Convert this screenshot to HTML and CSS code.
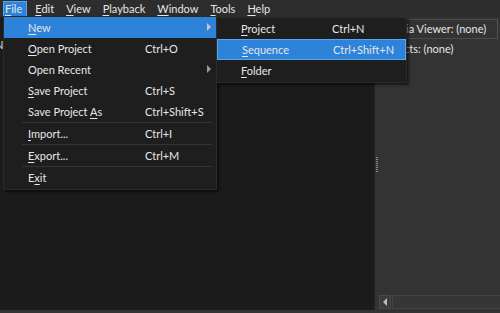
FILE: index.html
```html
<!DOCTYPE html>
<html>
<head>
<meta charset="utf-8">
<link rel="stylesheet" href="styles.css">
</head>
<body>
<div class="app">
  <div class="menubar">
    <span class="mb-item active"><u>F</u>ile</span>
    <span class="mb-item"><u>E</u>dit</span>
    <span class="mb-item"><u>V</u>iew</span>
    <span class="mb-item"><u>P</u>layback</span>
    <span class="mb-item"><u>W</u>indow</span>
    <span class="mb-item"><u>T</u>ools</span>
    <span class="mb-item"><u>H</u>elp</span>
  </div>
  <div class="workspace">
    <div class="left-pane">
      <div class="peek">N</div>
    </div>
    <div class="right-pane">
      <div class="viewer-title">Media Viewer: (none)</div>
      <div class="effects-title">Effects: (none)</div>
      <div class="splitter"></div>
      <div class="spacer"></div>
      <div class="hscroll">
        <div class="arrow-btn"><span class="tri-left"></span></div>
        <div class="track"></div>
      </div>
    </div>
  </div>
  <div class="statusbar"></div>

  <div class="menu file-menu">
    <div class="mi sel"><span class="lbl"><u>N</u>ew</span><span class="sc"></span><span class="sub-arrow"></span></div>
    <div class="mi"><span class="lbl"><u>O</u>pen Project</span><span class="sc">Ctrl+O</span></div>
    <div class="mi"><span class="lbl">Open Recent</span><span class="sc"></span><span class="sub-arrow dim"></span></div>
    <div class="mi"><span class="lbl"><u>S</u>ave Project</span><span class="sc">Ctrl+S</span></div>
    <div class="mi"><span class="lbl">Save Project <u>A</u>s</span><span class="sc">Ctrl+Shift+S</span></div>
    <div class="sep"></div>
    <div class="mi"><span class="lbl"><u>I</u>mport...</span><span class="sc">Ctrl+I</span></div>
    <div class="sep"></div>
    <div class="mi"><span class="lbl"><u>E</u>xport...</span><span class="sc">Ctrl+M</span></div>
    <div class="sep"></div>
    <div class="mi"><span class="lbl">E<u>x</u>it</span><span class="sc"></span></div>
  </div>

  <div class="menu sub-menu">
    <div class="mi"><span class="lbl"><u>P</u>roject</span><span class="sc">Ctrl+N</span></div>
    <div class="mi sel boxed"><span class="lbl"><u>S</u>equence</span><span class="sc">Ctrl+Shift+N</span></div>
    <div class="mi"><span class="lbl"><u>F</u>older</span><span class="sc"></span></div>
  </div>
</div>
</body>
</html>
```
FILE: styles.css
```css
* { box-sizing: border-box; }
html, body { margin: 0; padding: 0; }
body {
  width: 500px;
  height: 313px;
  overflow: hidden;
  background: #1b1b1b;
  font-family: Lato, "Noto Sans", sans-serif;
  font-size: 11px;
  color: #e6e6e6;
}
u { text-decoration: underline; text-underline-offset: 2px; text-decoration-thickness: 1px; }
.app {
  position: relative;
  width: 500px;
  height: 313px;
  display: flex;
  flex-direction: column;
}
.menubar {
  height: 17px;
  background: #2d2d2d;
  display: flex;
  align-items: stretch;
  padding-left: 3px;
  padding-top: 1px;
}
.mb-item {
  padding: 0 6px;
  line-height: 15px;
}
.mb-item.active {
  background: #2d82d9;
  border: 1px solid #5ea4e8;
  line-height: 13px;
  padding: 0 4px 0 1px;
  margin-right: 2px;
}
.workspace {
  flex: 1;
  display: flex;
}
.left-pane {
  flex: 1;
  background: #1b1b1b;
  position: relative;
}
.peek {
  padding: 21px 0 0 0;
  margin-left: -5px;
  color: #ddd;
}
.right-pane {
  width: 127px;
  background: #333333;
  border-left: 2px solid #202020;
  display: flex;
  flex-direction: column;
  position: relative;
  padding-left: 4px;
}
.viewer-title {
  margin-top: 2px;
  height: 20px;
  line-height: 18px;
  border: 1px solid #4b4b4b;
  border-right-color: #555;
  margin-right: 2px;
  padding-left: 4px;
  white-space: nowrap;
  overflow: hidden;
}
.effects-title {
  margin-top: 2px;
  padding-left: 6px;
  line-height: 16px;
  white-space: nowrap;
}
.splitter {
  position: absolute;
  left: 1px;
  top: 140px;
  width: 2px;
  height: 15px;
  background: repeating-linear-gradient(to bottom, #8a8a8a 0 1px, transparent 1px 2px);
}
.spacer { flex: 1; }
.hscroll {
  height: 14px;
  display: flex;
  gap: 1px;
  margin-bottom: 1px;
}
.arrow-btn {
  width: 12px;
  background: #3b3b3b;
  border: 1px solid #484848;
  display: flex;
  align-items: center;
  justify-content: center;
}
.tri-left {
  width: 0; height: 0;
  border-top: 4px solid transparent;
  border-bottom: 4px solid transparent;
  border-right: 4px solid #bdbdbd;
}
.track {
  flex: 1;
  background: #363636;
  border: 1px solid #444;
  border-right: none;
}
.statusbar {
  height: 3px;
  background: #333;
}

.menu {
  position: absolute;
  background: #1e1e1e;
  border: 1px solid #2b2b2b;
  box-shadow: 2px 2px 2px rgba(0,0,0,0.55);
  padding: 0;
}
.file-menu {
  left: 3px;
  top: 16px;
  width: 214px;
  height: 174px;
}
.sub-menu {
  left: 216px;
  top: 17px;
  width: 191px;
  height: 66px;
}
.mi {
  height: 21px;
  display: flex;
  align-items: center;
  position: relative;
  white-space: nowrap;
}
.file-menu .lbl { width: 141px; padding-left: 24px; }
.sub-menu .lbl { width: 115px; padding-left: 24px; }
.mi.sel { background: #2d82d9; }
.mi.boxed { border: 1px solid #5ea4e8; }
.sub-arrow {
  position: absolute;
  right: 5px;
  top: 6px;
  width: 0; height: 0;
  border-top: 4px solid transparent;
  border-bottom: 4px solid transparent;
  border-left: 4px solid #c8c8c8;
}
.sub-arrow.dim { border-left-color: #9a9a9a; }
.sep {
  height: 1px;
  margin: 0 0 0 18px;
  width: 190px;
  background: #343434;
}
```
